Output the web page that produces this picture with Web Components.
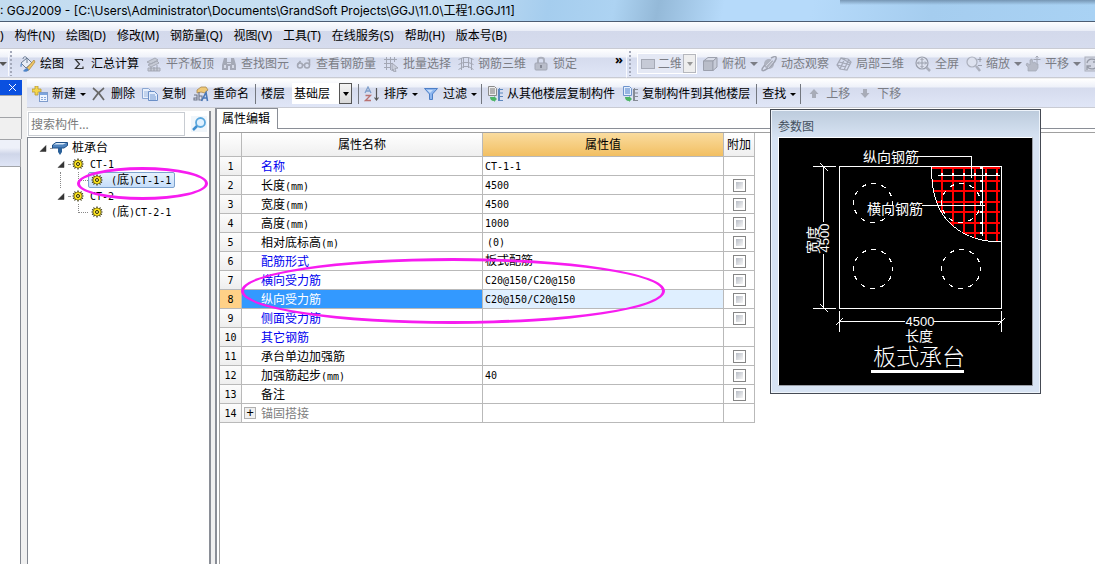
<!DOCTYPE html>
<html lang="zh-CN">
<head>
<meta charset="utf-8">
<title>GGJ2009</title>
<style>
    html, body { height: 100%; }
    body {
        margin: 0;
        display: flex;
        flex-direction: column;
        overflow: hidden;
        background: #f0f0f0;
        color: #000;
        font: 12px/16px "Noto Sans", "Noto Sans CJK SC", sans-serif;
    }
    .bars { display: flex; }
    .bars tool-bar:last-child { flex: 1; }
    main { flex: 1; display: flex; gap: 5px; min-height: 0; padding-top: 1px; }
    .editor { flex: 1; min-width: 0; display: flex; flex-direction: column; }
    .panes { flex: 1; display: flex; gap: 4px; min-height: 0; }
    tab-panel { flex: 1; }
    float-window { position: absolute; left: 770px; top: 109px; }
    mark-ellipse { position: absolute; pointer-events: none; }
    #mark-tree { left: 77px; top: 167px; width: 131px; height: 33px; }
    #mark-rows { left: 241px; top: 258px; width: 424px; height: 66px; }
</style>
</head>
<body>

<title-bar>: GGJ2009 - [C:\Users\Administrator\Documents\GrandSoft Projects\GGJ\11.0\工程1.GGJ11]</title-bar>
<menu-bar items=")|构件(N)|绘图(D)|修改(M)|钢筋量(Q)|视图(V)|工具(T)|在线服务(S)|帮助(H)|版本号(B)"></menu-bar>

<div class="bars">
    <tool-bar class="main-tools" more style="width: 627px">
        <tool-arrow></tool-arrow>
        <tool-grip line></tool-grip>
        <tool-button icon="paint">绘图</tool-button>
        <tool-button icon="sigma">汇总计算</tool-button>
        <tool-button icon="align" disabled>平齐板顶</tool-button>
        <tool-button icon="find" disabled>查找图元</tool-button>
        <tool-button icon="glasses" disabled>查看钢筋量</tool-button>
        <tool-button icon="batch" disabled>批量选择</tool-button>
        <tool-button icon="grid" disabled>钢筋三维</tool-button>
        <tool-button icon="lock" disabled>锁定</tool-button>
    </tool-bar>
    <tool-bar>
        <tool-grip></tool-grip>
        <tool-combo icon="rect" value="二维" label="视图模式" disabled></tool-combo>
        <tool-button icon="cube" drop disabled>俯视</tool-button>
        <tool-button icon="orbit" disabled>动态观察</tool-button>
        <tool-button icon="mesh" disabled>局部三维</tool-button>
        <tool-line></tool-line>
        <tool-button icon="full" disabled>全屏</tool-button>
        <tool-button icon="zoom" drop disabled>缩放</tool-button>
        <tool-button icon="hand" drop disabled>平移</tool-button>
        <tool-button icon="rotate" disabled></tool-button>
    </tool-bar>
</div>

<main>
    <side-dock></side-dock>
    <div class="editor">
        <tool-bar>
            <tool-button icon="new" drop>新建</tool-button>
            <tool-button icon="cross">删除</tool-button>
            <tool-button icon="copy">复制</tool-button>
            <tool-button icon="rename">重命名</tool-button>
            <tool-line></tool-line>
            <tool-combo value="基础层" label="楼层"></tool-combo>
            <tool-line></tool-line>
            <tool-button icon="sort" drop>排序</tool-button>
            <tool-button icon="filter" drop>过滤</tool-button>
            <tool-line></tool-line>
            <tool-button icon="from">从其他楼层复制构件</tool-button>
            <tool-button icon="to">复制构件到其他楼层</tool-button>
            <tool-line></tool-line>
            <tool-button drop>查找</tool-button>
            <tool-line></tool-line>
            <tool-button icon="up" disabled>上移</tool-button>
            <tool-button icon="down" disabled>下移</tool-button>
        </tool-bar>
        <div class="panes">
            <component-tree></component-tree>
            <tab-panel label="属性编辑"><property-grid></property-grid></tab-panel>
        </div>
    </div>
</main>

<float-window label="参数图"><param-drawing></param-drawing></float-window>
<mark-ellipse id="mark-tree"></mark-ellipse>
<mark-ellipse id="mark-rows"></mark-ellipse>

<script>
// 16x16 toolbar and tree icons
const ICONS = {
    paint: `<path d="M1 7 7 2l5 5-6 5z" fill="#e8eef6" stroke="#6b7c93"/><path d="M3 3c0-3 4-3 4 0v4" fill="none" stroke="#6b7c93"/><path d="M1 7c-1 2-1 4 0 4s1-2 1-3" fill="#6f9bd0"/><path d="M14 4l1 2-6 8-3 1 1-3z" fill="#f0c766" stroke="#a98336" stroke-width=".7"/><path d="M5 13c2-2 5 0 3 2-2 1-4 1-5 0z" fill="#4d84c8"/>`,
    sigma: `<path d="M11.500 5V3.500H4.500l4 4.500-4 4.500h7.500v-2" fill="none" stroke="#333" stroke-width="1.200"/>`,
    align: `<path d="M1 6l8-4 3 2-7 4zM2 9l9-4 2 2-8 4zM2 12h12v3H2z" fill="#c3c7d1" stroke="#9da1ac"/><path d="M5 11v4M8 11v4M11 9v6" stroke="#8f939e"/>`,
    find: `<path d="M3 2h3v4h4V2h3l2 7v5H9v-4H7v4H1V9z" fill="#9ca0ad"/><path d="M3 9h2v3H3zM11 9h2v3h-2zM6 7h4v1H6z" fill="#d5d9e6"/>`,
    glasses: `<g fill="none" stroke="#9a9eaa" stroke-width="1.500"><circle cx="4" cy="9.500" r="2.500"/><circle cx="11" cy="9.500" r="2.500"/><path d="M6.500 9h2M13.500 9V4h-2M1.500 9l3-4"/></g>`,
    batch: `<g fill="none" stroke="#9a9eaa"><path d="M1 3.500h13M1 7.500h8M1 11.500h7M3.500 1v13M7.500 1v13M11.500 1v5"/></g><path d="M9 7l6 5-3 .5 1 3-2 .5-1-3-1 2z" fill="#c8ccd8" stroke="#8f939e" stroke-width=".8"/>`,
    grid: `<path d="M.500 3.500 5.500 1.500h5l5 2M.500 8.500l5-2h5l5 2M.500 13.500l5-3h5l5 3M3.500 2v12M5.500 1v11M10.500 1v11M13.500 2v12" fill="none" stroke="#9a9eaa"/>`,
    lock: `<path d="M5 7V4c0-3 6-3 6 0v3" fill="none" stroke="#a3a7b3" stroke-width="2"/><rect x="2" y="7" width="12" height="7" rx="1" fill="#b4b8c4" stroke="#999daa"/><path d="M8 9v3" stroke="#777b86" stroke-width="2"/>`,
    rect: `<rect x="1.500" y="3.500" width="13" height="9" fill="#c6cad6" stroke="#a5a9b5"/>`,
    cube: `<path d="M1.500 5 6 1.500h9L11 5z" fill="#d9dce6" stroke="#9195a1"/><path d="M1.500 5H11v9.500H1.500z" fill="#b4b8c3" stroke="#9195a1"/><path d="M11 5l4-3.500V11l-4 3.500z" fill="#c5c9d4" stroke="#9195a1"/>`,
    orbit: `<circle cx="8" cy="8" r="5" fill="#a8acb8"/><path d="M4 9C0 13 0 16 4 14S14 7 15 3s-3-2-5-1" fill="none" stroke="#9498a5" stroke-width="1.500"/><path d="M5 10l6-6M7 12l5-6" stroke="#d4d8e4"/>`,
    mesh: `<path d="M1 9 5 2l7 1 3 3-4 8-7-1zM3 6l8 2 3 1M4 13l5-11M8 14l5-11M1 9l9 2M5 2l9 5" fill="none" stroke="#9a9eab" stroke-width="1.200"/>`,
    full: `<circle cx="7" cy="7" r="6" fill="#dfe3ef" stroke="#8f939f" stroke-width="1.200"/><path d="M7 2.500v9M2.500 7h9M5.500 4 7 2.500 8.500 4M5.500 10 7 11.500 8.500 10M4 5.500 2.500 7 4 8.500M10 5.500 11.500 7 10 8.500" fill="none" stroke="#8f939f"/><path d="M11.500 11.500l3.500 3.500" stroke="#a4a8b4" stroke-width="2.500"/>`,
    zoom: `<circle cx="6" cy="6" r="5" fill="#dfe3ef" stroke="#a4a8b4" stroke-width="1.200"/><path d="M10 10l4 5" stroke="#a4a8b4" stroke-width="2.500"/><path d="M14 1v5M11.500 3.500h4M12 9.500h4" stroke="#8f939f"/>`,
    hand: `<path d="M3 15V11L1 9l1-2 3 2V4l2-1 1 4 2-1 1 2 2 0v4l-2 3z" fill="#b0b4c0" stroke="#9a9eab" stroke-width=".7"/><path d="M12 0v8M8.500 3.500h7M10.500 1.500 12 0l1.500 1.500" fill="none" stroke="#9a9eab"/>`,
    rotate: `<rect x="1" y="1" width="15" height="14" fill="#d0d4e0" stroke="#a4a8b4"/><path d="M3 7c1-5 8-5 10-1M13 9c-1 5-8 5-10 1M13 2v4H9M3 14v-4h4" fill="none" stroke="#8a8e9a" stroke-width="1.300"/>`,
    new: `<path d="M3 0h3v3h3v3H6v3H3V6H0V3h3z" fill="#f4d64e" stroke="#b89a35" stroke-width=".8"/><rect x="7.500" y="6.500" width="8" height="9" fill="#eff5ff" stroke="#7f9ccc"/><path d="M8 7h7v2H8z" fill="#7ca4dd"/><path d="M9 11.500h2M12 11.500h2M9 13.500h2M12 13.500h2" stroke="#89a9d9"/>`,
    cross: `<path d="M2 2C6 5 10 9 13 14M13 2C9 5 5 9 2 14" fill="none" stroke="#686868" stroke-width="1.600"/>`,
    copy: `<path d="M.500 2.500h6l3 3v7h-9z" fill="#e8f0fc" stroke="#8aa6d2"/><path d="M2 6h5M2 8h5M2 10h5" stroke="#9db7df"/><path d="M6.500 5.500h6l3 3v6h-9z" fill="#e1ecfc" stroke="#6b8fc7"/><path d="M8 9h5M8 11h6M8 13h6" stroke="#7499d0"/>`,
    rename: `<path d="M4 4l4-3 5 0 2 3-3 3-4-1-4 1z" fill="#efc978" stroke="#a8894e" stroke-width=".8"/><path d="M1 9h3v5H1v-2h3M6 6v8h3v-4H6" fill="none" stroke="#6d7485" stroke-width="1.100"/><path d="M8.500 15 13 6.500 14.500 15M10 12h4.500" fill="none" stroke="#4a78b8" stroke-width="1.600"/>`,
    sort: `<path d="M1 7 4 1l3 6M2 5h4" fill="none" stroke="#7f9fcb" stroke-width="1.300"/><path d="M1.500 9.500h5l-5 5H7" fill="none" stroke="#b97272" stroke-width="1.300"/><path d="M12.500 2v12M10.500 11.500l2 2.500 2-2.500" fill="none" stroke="#555" stroke-width="1.200"/>`,
    filter: `<path d="M1.500 2.500h13L9.500 8v5.500h-3V8z" fill="#8db6ef" stroke="#4d7fc7"/><path d="M4 4h6l-3 3z" fill="#c9defa"/>`,
    from: `<path d="M1.500.500h6l2 2v7h-8z" fill="#eee" stroke="#8b8b8b"/><path d="M3 3h5M3 5h5M3 7h5" stroke="#777"/><path d="M3 11h4v-1l3 3-3 3v-1c-3 0-4-2-4-4z" fill="#4cb565"/><path d="M11.500 3v12M11.500 3.500H16M11.500 7H16M11.500 10.500H16M11.500 14.500H16M12.500 2v13" stroke="#5e88bd"/>`,
    to: `<path d="M1.500.500h6l2 2v7h-8z" fill="#e4eefc" stroke="#6e94cd"/><path d="M3 3h5M3 5h5M3 7h5" stroke="#4b7fc9"/><path d="M3 11h4v-1l3 3-3 3v-1c-3 0-4-2-4-4z" fill="#4cb565"/><path d="M11.500 3v12M11.500 3.500H16M11.500 7H16M11.500 10.500H16M11.500 14.500H16M12.500 2v13" stroke="#858b95"/>`,
    up: `<path d="M8 3l4.500 5H10v4H6V8H3.500z" fill="#a0a4af"/>`,
    down: `<path d="M8 12 3.500 7H6V3h4v4h2.500z" fill="#a0a4af"/>`,
    search: `<circle cx="9.500" cy="6.500" r="4.500" fill="#e0f1ff" stroke="#5aa7dd" stroke-width="1.800"/><path d="M6 10l-4 4" stroke="#3e8fd0" stroke-width="2.500"/>`,
    pile: `<path d="M.500 5 4 2.500h11.500v3L12 8H.500z" fill="#4f83bd" stroke="#1f4f86"/><path d="M1.500 4.500 4.500 3H14l-3 1.500z" fill="#dcebfa"/><path d="M6 8h4v4l-2 3-2-3z" fill="#2a6099"/>`,
    gear: `<path d="M8 2.500v11M2.500 8h11M4.500 3.500l7 9M11.500 3.500l-7 9M3 5.500l10 5M13 5.500l-10 5" stroke="#2e2a00" stroke-width="1.200"/><circle cx="8" cy="8" r="4" fill="#ffe61e" stroke="#5c5300" stroke-width=".6"/><circle cx="8" cy="8" r="1.500" fill="#fff38a" stroke="#2e2a00"/>`,
    closed: `<path d="M12 5.500v6H6z" fill="#333" stroke="#333" stroke-width=".5"/>`
};

function icon(name){
    return `<svg width="16" height="16" viewBox="0 0 16 16" aria-hidden="true">${ICONS[name]}</svg>`;
}

// Latin runs in the grid and tree are half the width of a Chinese character
function halfWidth(text){
    return text.replace(/[\x21-\x7e]+/g, run => `<span class="half">${run}</span>`);
}

const HALF = `.half { font: 10px/14px "DejaVu Sans Mono", monospace; }`;

class BaseElement extends HTMLElement{

    constructor(){
        super();
        this.attachShadow({ mode: "open" });
    }

    connectedCallback(){
        const template = document.createElement("template");
        template.innerHTML = this.getTemplate();
        this.shadowRoot.appendChild(template.content.cloneNode(true));
    }
}

customElements.define("title-bar", class extends BaseElement{
    getTemplate(){
        return `
            <style>
                :host {
                    display: block;
                    height: 21px;
                    border-bottom: 1px solid #4b5c73;
                    overflow: hidden;
                    white-space: nowrap;
                    font: 12px/21px Inter, "Noto Sans CJK SC", sans-serif;
                    background:
                        linear-gradient(#5c7894aa, #5c789400 5px) 840px 0 / 100% 100% no-repeat,
                        linear-gradient(100deg, #c3dcf0, #c9e0f3 40%, #a5cdee 50%, #add3f2 56%, #94b9d8 60%, #b6dafa 66%, #b6dafa 74%, #a5cdef 85%, #a9d2f4);
                }
            </style>
            <slot></slot>`;
    }
});

customElements.define("menu-bar", class extends BaseElement{
    getTemplate(){
        const items = this.getAttribute("items").split("|");
        return `
            <style>
                :host {
                    display: block;
                    height: 26px;
                    border-bottom: 1px solid #c9cbd3;
                    background: linear-gradient(#fcfdff, #e9edf7 9px, #d3d9eb 9px, #d6dcee);
                }
                nav { display: flex; gap: 11px; height: 100%; box-sizing: border-box; padding-top: 2px; }
                button { border: 0; padding: 0; background: none; font: inherit; color: inherit; white-space: nowrap; }
            </style>
            <nav>${items.map(i => `<button>${i}</button>`).join("")}</nav>`;
    }
});

customElements.define("tool-bar", class extends BaseElement{
    getTemplate(){
        const more = this.hasAttribute("more") ? `<button aria-label="更多">»</button>` : "";
        return `
            <style>
                :host {
                    display: flex;
                    box-sizing: border-box;
                    align-items: center;
                    gap: 7px;
                    height: 29px;
                    padding: 1px 0 0 5px;
                    overflow: hidden;
                    flex-shrink: 0;
                    min-width: 0;
                    border-bottom: 1px solid #c9cbd3;
                    background: linear-gradient(#fff, #eef1f9 8px, #d5dbed 9px, #e0e6f7);
                }
                :host([more]) { padding-left: 0; border-right: 1px solid #f8f9fd; }
                :host(:last-child) { flex-shrink: 1; }
                button { align-self: flex-start; margin-left: auto; border: 0; padding: 0 3px; background: none; font: bold 13px/18px "Noto Sans", sans-serif; color: #000; }
                :host(:not([more])) ::slotted(tool-grip) { margin-left: -4px; }
            </style>
            <slot></slot>${more}`;
    }
});

customElements.define("tool-button", class extends BaseElement{
    getTemplate(){
        const name = this.getAttribute("icon");
        const disabled = this.hasAttribute("disabled") ? "disabled" : "";
        return `
            <style>
                :host { display: block; flex-shrink: 0; }
                :host([drop]) { margin-right: -2px; }
                :host([drop][disabled]) { margin-right: -4px; }
                button { display: flex; align-items: center; gap: 4px; border: 0; padding: 1px 0 0; background: none; font: inherit; color: #000; white-space: nowrap; }
                button:disabled { color: #7b7d85; }
                button:disabled svg { opacity: .85; }
                i { border: solid transparent; border-width: 3px 3px 0; border-top-color: currentColor; }
                :host([drop][disabled]) i { border-width: 4px 4px 0; }
            </style>
            <button ${disabled} ${this.textContent ? "" : `aria-label="旋转"`}>${name ? icon(name) : ""}<slot></slot>${this.hasAttribute("drop") ? "<i></i>" : ""}</button>`;
    }
});

customElements.define("tool-arrow", class extends BaseElement{
    getTemplate(){
        return `
            <style>
                :host { display: block; width: 1px; }
                i { display: block; width: 0; border: solid transparent; border-width: 4px 4px 0; border-top-color: #555; margin-left: -1px; }
            </style><i></i>`;
    }
});

customElements.define("tool-grip", class extends BaseElement{
    getTemplate(){
        return `
            <style>
                :host { display: block; width: 3px; height: 25px; padding-left: 1px; }
                :host([line]) { border-left: 1px solid #f8f9fd; }
                i { display: block; width: 2px; height: 100%; background: repeating-linear-gradient(#a4a9ba 0 2px, transparent 2px 4px); }
            </style><i></i>`;
    }
});

customElements.define("tool-line", class extends BaseElement{
    getTemplate(){
        return `<style>:host { display: block; width: 1px; height: 20px; margin: 0 -2px 0 -1px; background: #73777f; }</style>`;
    }
});

customElements.define("tool-combo", class extends BaseElement{
    getTemplate(){
        const name = this.getAttribute("icon");
        const disabled = this.hasAttribute("disabled") ? "disabled" : "";
        const label = this.getAttribute("label");
        return `
            <style>
                :host { display: flex; align-items: center; gap: 7px; flex-shrink: 0; }
                :host([disabled]) { margin: 0 -2px 0 -1px; }
                label { padding-top: 1px; }
                .box { display: flex; align-items: center; box-sizing: border-box; width: 60px; height: 21px; padding-left: 2px; background: #fff; }
                select { appearance: none; flex: 1; min-width: 0; border: 0; padding: 0; background: none; font: inherit; color: #000; opacity: 1; }
                .arrow { display: flex; align-items: center; justify-content: center; box-sizing: border-box; width: 13px; height: 100%; border: 1px solid #555; background: linear-gradient(#f4f4f4, #d8d8d8); }
                .arrow::after { content: ""; border: solid transparent; border-width: 4px 3px 0; border-top-color: #000; }
                :host([disabled]) .box { background: #e4e8f4; border: 1px solid #fff; gap: 2px; }
                :host([disabled]) select { color: #7b7d85; }
                :host([disabled]) .arrow { border-color: #b5b7bd; background: #eee; }
                :host([disabled]) .arrow::after { border-top-color: #999; }
            </style>
            ${name ? "" : `<label for="choice">${label}</label>`}
            <div class="box">${name ? icon(name) : ""}<select id="choice" aria-label="${label}" ${disabled}><option>${this.getAttribute("value")}</option></select><span class="arrow"></span></div>`;
    }
});

customElements.define("side-dock", class extends BaseElement{
    getTemplate(){
        return `
            <style>
                :host { display: flex; flex-direction: column; width: 22px; flex-shrink: 0; margin-top: 1px; }
                header { height: 15px; padding-right: 3px; background: #0a50e0; text-align: right; }
                button { border: 0; padding: 3px 2px; background: none; line-height: 0; }
                .row { height: 21px; border: solid #a2a4a8; border-width: 1px 1px 0 0; }
                .head { height: 26px; margin-right: 1px; border: solid #a2a4a8; border-width: 1px 1px 1px 0; background: linear-gradient(#eef1f9 8px, #cfd6e9 14px, #dfe5f6); }
                .list { flex: 1; margin-right: 1px; border-right: 1px solid #828790; background: #fff; }
            </style>
            <header><button aria-label="关闭"><svg width="9" height="9" viewBox="0 0 9 9"><path d="M1 1l7 7M8 1 1 8" stroke="#fff"/></svg></button></header>
            <div class="row"></div>
            <div class="row"></div>
            <div class="head"></div>
            <div class="list"></div>`;
    }
});

customElements.define("component-tree", class extends BaseElement{
    getTemplate(){
        const branch = (name, leaf, selected) => `
            <li>
                <div class="node type">${icon("closed")}<i></i>${icon("gear")}<span>${halfWidth(name)}</span></div>
                <ul><li class="leaf"><div class="node item ${selected}">${icon("gear")}<span>${halfWidth(leaf)}</span></div></li></ul>
            </li>`;
        return `
            <style>
                ${HALF}
                :host { display: flex; flex-direction: column; width: 182px; flex-shrink: 0; margin-top: 3px; border-right: 2px solid #8a8e96; }
                .search { display: flex; align-items: center; gap: 6px; height: 26px; padding-left: 1px; background: #fff; }
                input { box-sizing: border-box; width: 157px; height: 24px; border: 1px solid #c8ccd2; padding: 0 2px; font: inherit; }
                input::placeholder { color: #7a7a7a; }
                .search button { border: 0; padding: 0; background: #f0f6fb; line-height: 0; }
                ul { list-style: none; margin: 0; padding: 0; }
                .tree { flex: 1; border: solid #828790; border-width: 1px 0 0 1px; padding-top: 2px; background: #fff; }
                .node { display: flex; align-items: center; height: 16px; white-space: nowrap; }
                .node i { width: 6px; border-top: 1px dotted #999; }
                .node > span { margin-left: 4px; }
                .node svg { flex-shrink: 0; }
                .root { padding-left: 6px; }
                .root i { width: 2px; }
                .type { padding-left: 24px; }
                .type i { width: 2px; }
                .leaf { display: flex; margin-left: 50px; }
                .leaf::before { content: ""; width: 9px; height: 8px; border: dotted #888; border-width: 0 0 1px 1px; }
                li:not(:last-child) > ul > .leaf { margin-left: 32px; border-left: 1px dotted #888; padding-left: 17px; }
                .item { box-sizing: border-box; border: 1px solid transparent; border-radius: 2px; padding-right: 3px; }
                .item > span { margin-left: 6px; }
                .selected { border-color: #7da2ce; background: linear-gradient(#e6f1fd, #c6defa); }
            </style>
            <div class="search"><input type="text" placeholder="搜索构件..." aria-label="搜索构件"><button aria-label="搜索">${icon("search")}</button></div>
            <ul class="tree">
                <li>
                    <div class="node root">${icon("closed")}<i></i>${icon("pile")}<span>桩承台</span></div>
                    <ul>
                        ${branch("CT-1", "(底)CT-1-1", "selected")}
                        ${branch("CT-2", "(底)CT-2-1", "")}
                    </ul>
                </li>
            </ul>`;
    }
});

customElements.define("tab-panel", class extends BaseElement{
    getTemplate(){
        return `
            <style>
                :host { display: flex; flex-direction: column; min-width: 0; background: #fff; border-left: 2px solid #8a8e96; }
                .tabs { display: flex; height: 21px; }
                button { border: solid #8a8e96; border-width: 1px 1px 0 0; padding: 0 7px 0 5px; background: #fff; font: inherit; color: #000; }
                .rest { flex: 1; border-bottom: 1px solid #8a8e96; }
                .page { flex: 1; margin: 3px 0 0 2px; border: solid #a0a0a0; border-width: 1px 0 0 1px; }
            </style>
            <div class="tabs"><button>${this.getAttribute("label")}</button><div class="rest"></div></div>
            <div class="page"><slot></slot></div>`;
    }
});

// name, value, has check box, kind
const ROWS = [
    ["名称", "CT-1-1", false, "key"],
    ["长度(mm)", "4500", true, ""],
    ["宽度(mm)", "4500", true, ""],
    ["高度(mm)", "1000", true, ""],
    ["相对底标高(m)", "(0)", true, "inner"],
    ["配筋形式", "板式配筋", true, "key"],
    ["横向受力筋", "C20@150/C20@150", true, "key"],
    ["纵向受力筋", "C20@150/C20@150", true, "key current"],
    ["侧面受力筋", "", true, "key"],
    ["其它钢筋", "", false, "key"],
    ["承台单边加强筋", "", true, ""],
    ["加强筋起步(mm)", "40", true, ""],
    ["备注", "", true, ""],
    ["锚固搭接", "", false, "group"]
];

customElements.define("property-grid", class extends BaseElement{
    getTemplate(){
        const rows = ROWS.map(([name, value, check, kind], i) => `
            <tr class="${kind}">
                <th scope="row">${halfWidth(String(i + 1))}</th>
                <td class="name">${kind === "group" ? `<button aria-label="展开">+</button>` : ""}${halfWidth(name)}</td>
                <td class="value">${halfWidth(value)}</td>
                <td class="check">${check ? `<input type="checkbox" aria-label="${name} 附加">` : ""}</td>
            </tr>`).join("");
        return `
            <style>
                ${HALF}
                :host { display: block; }
                table { table-layout: fixed; width: 535px; border-spacing: 0; }
                th, td { box-sizing: border-box; height: 19px; border: solid #b9b9b9; border-width: 0 1px 1px 0; padding: 0; font-weight: normal; line-height: 14px; white-space: nowrap; }
                thead th { height: 24px; background: linear-gradient(#fff, #efefef); }
                thead .active { background: linear-gradient(#fadc9f, #f2bf62); }
                .num { width: 22px; }
                .extra { width: 31px; }
                tbody th { background: linear-gradient(#fcfcfc, #eee); text-align: center; }
                .name { padding: 2px 0 0 19px; }
                .value { padding-left: 2px; }
                .inner .value { padding-left: 4px; }
                .check { text-align: center; line-height: 0; }
                .key .name { color: #0000f0; }
                .current th { background: #ffd187; }
                .current .name { background: #3399ff; color: #fff; }
                .current .value { background: #dfefff; }
                .group .name { padding-left: 2px; color: #808080; }
                .group button { box-sizing: border-box; width: 12px; height: 12px; margin-right: 5px; border: 1px solid #b0b0b0; padding: 0; background: #f0f0f0; font: 12px/10px "DejaVu Sans Mono", monospace; color: #000; vertical-align: top; }
                input { appearance: none; box-sizing: border-box; width: 13px; height: 13px; margin: 0; border: 1px solid #858585; background: linear-gradient(135deg, #b8bdc6, #f6f6f6) content-box; padding: 2px; vertical-align: middle; }
            </style>
            <table>
                <thead><tr><th class="num"></th><th>属性名称</th><th class="active">属性值</th><th class="extra">附加</th></tr></thead>
                <tbody>${rows}</tbody>
            </table>`;
    }
});

customElements.define("float-window", class extends BaseElement{
    getTemplate(){
        return `
            <style>
                :host { display: block; border: 1px solid #454a54; padding: 0 7px 7px; background: linear-gradient(#bccbdc, #d7e3f3 28px); box-shadow: inset 0 0 0 1px #eef4fb; color: #44505e; }
                header { height: 27px; line-height: 34px; }
                .view { border: 1px solid; border-color: #fff #9a9ea6 #9a9ea6 #fff; }
            </style>
            <header>${this.getAttribute("label")}</header>
            <div class="view"><slot></slot></div>`;
    }
});

customElements.define("param-drawing", class extends BaseElement{
    getTemplate(){
        const bars = [30, 43, 53, 64, 74, 85, 95];
        const columns = [163, 174, 185, 196, 207, 218];
        const piles = [[94, 65], [182, 65], [94, 131], [182, 131]];
        return `
            <style>
                :host { display: block; background: #000; }
                svg { display: block; }
                text { fill: #fff; font: 14px/14px "Noto Sans CJK SC", sans-serif; }
                .dim { font: 13px/13px "Liberation Sans", sans-serif; text-anchor: middle; }
                .mid { text-anchor: middle; }
                .title { font-size: 23px; font-weight: 300; }
            </style>
            <svg width="253" height="247" viewBox="0 0 253 247">
                <defs><clipPath id="cut"><path d="M152 28C152 54 157 69 168 82 181 97 201 104 222 104V28z"/></clipPath></defs>
                <g clip-path="url(#cut)" stroke="#f00" stroke-width="2">
                    ${bars.map(y => `<path d="M150 ${y}H221"/>`).join("")}
                    ${columns.map(x => `<path d="M${x} 28V106"/>`).join("")}
                </g>
                <g fill="none" stroke="#fff" shape-rendering="crispEdges">
                    <path d="M60.500 28.500h162v142h-162zM152.500 28C152.500 54 157 69 168 82 181 97 201 104 222 104"/>
                    ${piles.map(([x, y]) => `<circle cx="${x}" cy="${y}" r="19.500" stroke-dasharray="5 5.210" stroke-dashoffset="2.500"/>`).join("")}
                    <path d="M159 37.500h62M203.500 29v69"/>
                    <path d="M139 18.500h53v21M143 67.500h63"/>
                    <path d="M34 28.500h23M34 170.500h23M44.500 28v56M44.500 116v54M41 25l8 8M41 166l8 8"/>
                    <path d="M60.500 173v21M222.500 173v21M60 183.500h66M155 183.500h67M57 187l7-7M219 187l7-7"/>
                </g>
                <g fill="#fff">
                    ${columns.map(x => `<path d="M${x - 1} 35h2v2h1v1h-4v-1h1z"/>`).join("")}
                    ${bars.map(y => `<path d="M201 ${y - 1}h2v-1h1v4h-1v-1h-2z"/>`).join("")}
                    <rect x="92" y="232" width="93" height="3"/>
                </g>
                <text x="84" y="24">纵向钢筋</text>
                <text x="88" y="76">横向钢筋</text>
                <text class="dim" x="141" y="188">4500</text>
                <text class="mid" x="140" y="203">长度</text>
                <text class="mid title" x="140" y="227">板式承台</text>
                <text class="dim" transform="translate(50 100) rotate(-90)">4500</text>
                <text class="mid" transform="translate(39 102) rotate(-90)">宽度</text>
            </svg>`;
    }
});

customElements.define("mark-ellipse", class extends BaseElement{
    getTemplate(){
        return `
            <style>
                :host { display: block; box-sizing: border-box; border: 3px solid #f71cf0; border-radius: 50%; }
            </style>`;
    }
});
</script>
</body>
</html>
